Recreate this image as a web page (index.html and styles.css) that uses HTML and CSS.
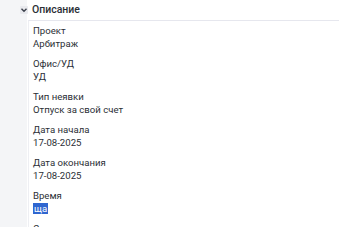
FILE: index.html
```html
<!DOCTYPE html>
<html lang="ru">
<head>
<meta charset="utf-8">
<link rel="stylesheet" href="styles.css">
</head>
<body>
<div class="page">
  <div class="section-head">
    <span class="toggle"><svg width="8" height="8" viewBox="0 0 8 8"><path d="M1.5 2.8 L4 5.3 L6.5 2.8" fill="none" stroke="#3a3f4a" stroke-width="1.4"/></svg></span>
    <span class="section-title">Описание</span>
  </div>
  <div class="section-body">
    <div class="field"><div class="label">Проект</div><div class="value">Арбитраж</div></div>
    <div class="field"><div class="label">Офис/УД</div><div class="value">УД</div></div>
    <div class="field"><div class="label">Тип неявки</div><div class="value">Отпуск за свой счет</div></div>
    <div class="field"><div class="label">Дата начала</div><div class="value">17-08-2025</div></div>
    <div class="field"><div class="label">Дата окончания</div><div class="value">17-08-2025</div></div>
    <div class="field"><div class="label">Время</div><div class="value"><span class="selected">ща</span></div></div>
    <div class="field"><div class="label">Статус</div><div class="value">Новая</div></div>
  </div>
</div>
</body>
</html>
```
FILE: styles.css
```css
html, body {
  margin: 0;
  padding: 0;
}
body {
  width: 339px;
  height: 227px;
  overflow: hidden;
  background: linear-gradient(to right, #f4f5f7 0, #f4f5f7 27px, #ffffff 27px);
  font-family: Roboto, "Liberation Sans", sans-serif;
  color: #2b2f36;
}
.page {
  display: flex;
  flex-direction: column;
}
.section-head {
  display: flex;
  align-items: center;
  height: 20px;
  padding-left: 20px;
  gap: 4px;
}
.toggle {
  width: 8px;
  height: 8px;
  display: flex;
  background: #e9eaee;
  border-radius: 1px;
}
.section-title {
  font-size: 10.5px;
  font-weight: 500;
  line-height: 12px;
}
.section-body {
  margin-left: 28px;
  border-top: 1px solid #e6e7ee;
  border-left: 1px solid #eeeff3;
  background: #ffffff;
  padding: 3px 0 0 4px;
  display: flex;
  flex-direction: column;
  gap: 7px;
  min-height: 220px;
}
.field {
  font-size: 9.6px;
  line-height: 13px;
}
.label {
  color: #2b2f36;
}
.value {
  color: #2b2f36;
}
.selected {
  background: #2f66d0;
  color: #ffffff;
  padding: 0 1px;
}
```
